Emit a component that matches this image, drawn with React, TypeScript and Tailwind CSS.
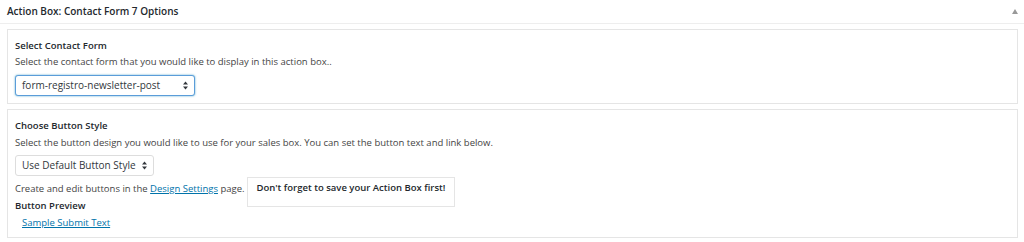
const font = "font-['Open_Sans',_'Liberation_Sans',_sans-serif]";

function Arrows() {
  return (
    <svg width="5" height="9" viewBox="0 0 5 9" className="shrink-0">
      <path d="M2.5 0.5 L5 3.5 L0 3.5 Z" fill="#32373c" />
      <path d="M0 5.5 L5 5.5 L2.5 8.5 Z" fill="#32373c" />
    </svg>
  );
}

function Select({ label, width, focused }: { label: string; width: string; focused?: boolean }) {
  return (
    <div
      className={`flex h-[21px] items-center justify-between rounded-[3px] border bg-white pl-[6px] pr-[6px] text-[10px] text-[#32373c] ${width} ${
        focused ? 'border-[#5b9dd9] shadow-[0_0_2px_rgba(30,140,190,0.8)]' : 'border-[#ddd]'
      }`}
    >
      <span>{label}</span>
      <Arrows />
    </div>
  );
}

export default function App() {
  return (
    <div className={`w-[1024px] h-[242px] bg-white overflow-hidden ${font}`}>
      {/* Box header */}
      <div className="flex h-[24px] items-center justify-between border-b border-[#eee] pl-[7px] pr-[6px]">
        <h2 className="text-[10px] font-semibold text-[#23282d]">Action Box: Contact Form 7 Options</h2>
        <div className="h-0 w-0 border-x-[3px] border-b-[5px] border-x-transparent border-b-[#999]" />
      </div>

      <div className="flex flex-col gap-[5px] pl-[7px] pr-[6px] pt-[5px]">
        {/* Contact form */}
        <div className="border border-[#e5e5e5] px-[7px] pb-[7px] pt-[10px]">
          <div className="text-[9.5px] font-semibold leading-[12px] text-[#23282d]">Select Contact Form</div>
          <p className="mt-[4px] text-[9.5px] leading-[12px] text-[#444]">
            Select the contact form that you would like to display in this action box..
          </p>
          <div className="mt-[7px]">
            <Select label="form-registro-newsletter-post" width="w-[180px]" focused />
          </div>
        </div>

        {/* Button style */}
        <div className="border border-[#e5e5e5] px-[7px] pb-[8px] pt-[10px]">
          <div className="text-[9.5px] font-semibold leading-[12px] text-[#23282d]">Choose Button Style</div>
          <p className="mt-[5px] text-[9.5px] leading-[12px] text-[#444]">
            Select the button design you would like to use for your sales box. You can set the button text and link
            below.
          </p>
          <div className="mt-[6px]">
            <Select label="Use Default Button Style" width="w-[139px]" />
          </div>
          <div className="flex items-start">
            <div className="flex flex-col">
              <p className="mt-[7px] text-[9.5px] leading-[12px] text-[#444]">
                Create and edit buttons in the{' '}
                <a href="#" className="text-[#0073aa] underline">
                  Design Settings
                </a>{' '}
                page.
              </p>
              <div className="mt-[5px] text-[9.5px] font-semibold leading-[12px] text-[#23282d]">Button Preview</div>
              <a href="#" className="ml-[7px] mt-[5px] text-[9.5px] leading-[12px] text-[#0073aa] underline">
                Sample Submit Text
              </a>
            </div>
            <div className="ml-[2px] mt-[1px] h-[30px] w-[208px] whitespace-nowrap border border-[#e5e5e5] px-[9px] pt-[4px] text-[9.5px] font-semibold leading-[12px] text-[#23282d]">
              Don't forget to save your Action Box first!
            </div>
          </div>
        </div>
      </div>
    </div>
  );
}
